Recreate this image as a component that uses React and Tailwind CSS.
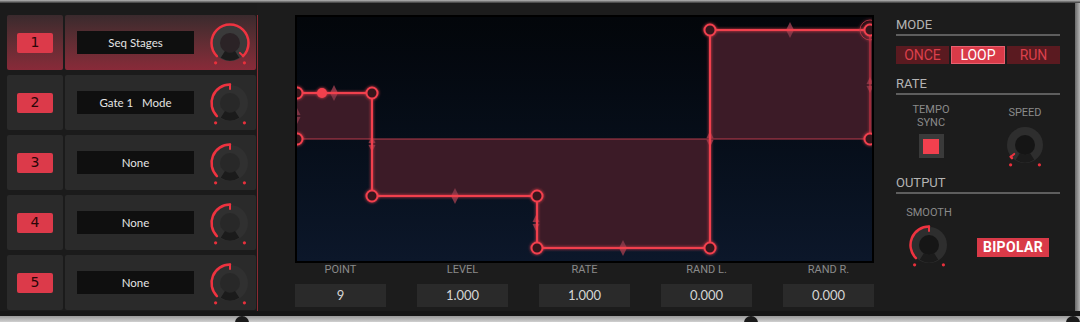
import React from 'react'

const rows = [
  { n: 1, name: 'Seq Stages', value: 1, active: true },
  { n: 2, name: 'Gate 1   Mode', value: 0.5 },
  { n: 3, name: 'None', value: 0.5 },
  { n: 4, name: 'None', value: 0.5 },
  { n: 5, name: 'None', value: 0.5 },
]

const params = [
  { label: 'POINT', value: '9' },
  { label: 'LEVEL', value: '1.000' },
  { label: 'RATE', value: '1.000' },
  { label: 'RAND L.', value: '0.000' },
  { label: 'RAND R.', value: '0.000' },
]

// angle in degrees from 12 o'clock, clockwise
const pt = (cx, cy, r, a) => {
  const t = (a * Math.PI) / 180
  return [cx + r * Math.sin(t), cy - r * Math.cos(t)]
}
const arc = (cx, cy, r, a0, a1) => {
  const [x0, y0] = pt(cx, cy, r, a0)
  const [x1, y1] = pt(cx, cy, r, a1)
  const large = a1 - a0 > 180 ? 1 : 0
  return `M${x0} ${y0} A${r} ${r} 0 ${large} 1 ${x1} ${y1}`
}

const Knob = ({ value, hole = '#272727', ring = '#323232' }) => {
  const cx = 25
  const cy = 23
  const end = -135 + 270 * value
  const [tx0, ty0] = pt(cx, cy, 18.5, end)
  const [tx1, ty1] = pt(cx, cy, 14, end)
  const [dlx, dly] = pt(cx, cy, 24.5, -144)
  const [drx, dry] = pt(cx, cy, 24.5, 144)
  return (
    <svg width="50" height="50" viewBox="0 0 50 50" className="overflow-visible">
      <circle cx={cx} cy={cy} r="18" fill={ring} />
      <circle cx={cx} cy={cy} r="10" fill={hole} />
      <path d={arc(cx, cy, 13.5, 148, 212)} stroke="#1b1b1b" strokeWidth="8" fill="none" />
      <path d={arc(cx, cy, 18.5, -135, end)} stroke="#ee3340" strokeWidth="2.5" fill="none" strokeLinecap="round" />
      <line x1={tx0} y1={ty0} x2={tx1} y2={ty1} stroke="#ee3340" strokeWidth="2" strokeLinecap="round" />
      <circle cx={dlx} cy={dly} r="1.6" fill="#e8303c" />
      <circle cx={drx} cy={dry} r="1.6" fill="#e8303c" />
    </svg>
  )
}

const Arrow = ({ x, y }) => (
  <g fill="#7e3444">
    <polygon points={`${x - 3.5},${y - 1} ${x + 3.5},${y - 1} ${x},${y - 8}`} />
    <polygon points={`${x - 3.5},${y + 1} ${x + 3.5},${y + 1} ${x},${y + 8}`} />
  </g>
)

const Graph = () => {
  const line = 'M0 76 L75 76 L75 179 L240 179 L240 231 L413 231 L413 13 L575 13'
  const fill = 'M0 122 L0 76 L75 76 L75 179 L240 179 L240 231 L413 231 L413 13 L575 13 L575 122 Z'
  const nodes = [
    [0, 76], [0, 122], [75, 76], [75, 179], [240, 179], [240, 231], [413, 231], [413, 13], [573, 13], [573, 122],
  ]
  const arrows = [
    [0, 99], [37, 76], [75, 127], [158, 179], [239, 206], [326, 231], [413, 122], [493, 13], [573, 68],
  ]
  return (
    <svg width="575" height="244" viewBox="0 0 575 244" className="block">
      <defs>
        <filter id="glow" x="-10%" y="-10%" width="120%" height="120%">
          <feGaussianBlur stdDeviation="1.8" result="b" />
          <feMerge>
            <feMergeNode in="b" />
            <feMergeNode in="SourceGraphic" />
          </feMerge>
        </filter>
      </defs>
      <path d={fill} fill="#3c1b27" />
      <line x1="0" y1="122" x2="575" y2="122" stroke="#d24252" strokeWidth="1" opacity="0.85" />
      {arrows.map(([x, y], i) => <Arrow key={i} x={x} y={y} />)}
      <g filter="url(#glow)">
        <path d={line} stroke="#f0404e" strokeWidth="2" fill="none" />
        <line x1="573" y1="13" x2="573" y2="122" stroke="#d83a48" strokeWidth="1" />
        {nodes.map(([x, y], i) => (
          <circle key={i} cx={x} cy={y} r="5.5" stroke="#f2404e" strokeWidth="2" fill="#36121c" />
        ))}
        <circle cx="25" cy="76" r="5" fill="#f2404e" />
        <circle cx="573" cy="13" r="10" stroke="#c33a48" strokeWidth="1" fill="none" opacity="0.8" />
      </g>
    </svg>
  )
}

const SectionTitle = ({ children, className = '' }) => (
  <div className={className}>
    <div className="h-[14px] leading-[14px] text-[13px] text-[#b4b4b4] font-['Roboto',sans-serif]">{children}</div>
    <div className="mt-[2px] h-[2px] bg-[#5e5e5e]" />
  </div>
)

export default function App() {
  return (
    <div className="w-[1080px] h-[322px] flex flex-col overflow-hidden bg-[#1c1c1c]">
      <div className="h-[3px] bg-linear-to-b from-[#b8b8b8] to-[#3a3a3a]" />

      <div className="h-[308px] flex">
        {/* slots */}
        <div className="w-[257px] pl-[7px] pr-[1px] pt-[12px] flex flex-col gap-[5px] bg-[#1b1b1b]">
          {rows.map((r) => (
            <div key={r.n} className="h-[55px] flex gap-[2px]">
              <div
                className={`w-[56px] rounded-[2px] flex items-center justify-center ${
                  r.active ? 'bg-linear-to-b from-[#3a2a2d] to-[#892a39]' : 'bg-[#2a2a2a]'
                }`}
              >
                <div className="w-[36px] h-[20px] rounded-[2px] bg-[#dc3a4a] flex items-center justify-center text-[14px] text-[#2a0608] font-['DejaVu_Sans',sans-serif]">
                  {r.n}
                </div>
              </div>
              <div
                className={`w-[191px] rounded-[2px] flex items-center ${
                  r.active ? 'bg-linear-to-b from-[#3a2a2d] to-[#892a39]' : 'bg-[#2a2a2a]'
                }`}
              >
                <div className="ml-[12px] w-[117px] h-[23px] bg-[#0f0f0f] flex items-center justify-center text-[11.5px] text-[#e4e4e4] whitespace-pre font-['Lato',sans-serif]">
                  {r.name}
                </div>
                <div className="ml-[11px] mt-[5px]">
                  <Knob value={r.value} hole={r.active ? '#2b2326' : '#282828'} ring={r.active ? '#3a3a3a' : '#303030'} />
                </div>
              </div>
            </div>
          ))}
        </div>
        <div className="w-px mt-[12px] h-[296px] bg-[#8a2a32]" />

        {/* graph */}
        <div className="w-[637px] pl-[37px] pt-[12px]">
          <div className="w-[579px] h-[248px] border-2 border-black bg-linear-to-b from-[#03060a] to-[#0c172a]">
            <Graph />
          </div>
          <div className="w-[579px] flex justify-between">
            {params.map((p) => (
              <div key={p.label} className="w-[91px] flex flex-col items-center">
                <div className="h-[14px] leading-[14px] text-[11px] text-[#8a8a8a] font-['Roboto',sans-serif]">{p.label}</div>
                <div className="mt-[7px] w-[91px] h-[23px] bg-[#2a2a2a] flex items-center justify-center text-[13px] text-[#d4d4d4] font-['Lato',sans-serif]">
                  {p.value}
                </div>
              </div>
            ))}
          </div>
        </div>

        {/* settings */}
        <div className="w-[180px] pl-[1px] pr-[15px] pt-[15px] flex flex-col">
          <SectionTitle>MODE</SectionTitle>
          <div className="mt-[10px] h-[18px] flex gap-[2px] text-[14px] font-['Roboto',sans-serif]">
            <div className="w-[53px] bg-[#5a1a20] text-[#dc404c] flex items-center justify-center">ONCE</div>
            <div className="w-[54px] bg-[#d93a48] border border-[#e86070] text-white flex items-center justify-center">LOOP</div>
            <div className="w-[53px] bg-[#5a1a20] text-[#dc404c] flex items-center justify-center">RUN</div>
          </div>

          <SectionTitle className="mt-[13px]">RATE</SectionTitle>
          <div className="h-[81px] flex">
            <div className="w-[70px] flex flex-col items-center">
              <div className="mt-[8px] text-[11px] leading-[13px] text-[#8a8a8a] text-center font-['Roboto',sans-serif]">
                TEMPO
                <br />
                SYNC
              </div>
              <div className="mt-[5px] w-[25px] h-[24px] bg-[#3a3a3a] flex items-center justify-center">
                <div className="w-[16px] h-[15px] bg-[#f2404e]" />
              </div>
            </div>
            <div className="ml-[24px] w-[70px] flex flex-col items-center">
              <div className="mt-[11px] h-[13px] leading-[13px] text-[11px] text-[#8a8a8a] font-['Roboto',sans-serif]">SPEED</div>
              <div className="mt-[3px]">
                <Knob value={0.02} hole="#151515" ring="#2e2e2e" />
              </div>
            </div>
          </div>

          <SectionTitle>OUTPUT</SectionTitle>
          <div className="flex">
            <div className="w-[66px] flex flex-col items-center">
              <div className="mt-[12px] h-[13px] leading-[13px] text-[11px] text-[#8a8a8a] font-['Roboto',sans-serif]">SMOOTH</div>
              <div className="mt-[3px]">
                <Knob value={0.5} hole="#161616" ring="#2e2e2e" />
              </div>
            </div>
            <div className="ml-[15px] mt-[44px] w-[72px] h-[19px] bg-[#d93a48] text-white text-[14px] font-bold tracking-wide flex items-center justify-center font-['Roboto',sans-serif]">
              BIPOLAR
            </div>
          </div>
        </div>

        <div className="w-[5px] bg-linear-to-r from-[#6a6a6a] to-[#b4b4b4]" />
      </div>

      <div className="h-[5px] bg-[#161616]" />
      <div className="relative h-[6px] bg-linear-to-b from-[#9a9a9a] to-[#d0d0d0]">
        <div className="absolute left-[235px] top-0 w-[14px] h-[14px] rounded-full bg-[#1a1a1a]" />
        <div className="absolute left-[744px] top-0 w-[14px] h-[14px] rounded-full bg-[#1a1a1a]" />
        <div className="absolute left-[1066px] top-0 w-[14px] h-[14px] rounded-full bg-[#1a1a1a]" />
      </div>
    </div>
  )
}
